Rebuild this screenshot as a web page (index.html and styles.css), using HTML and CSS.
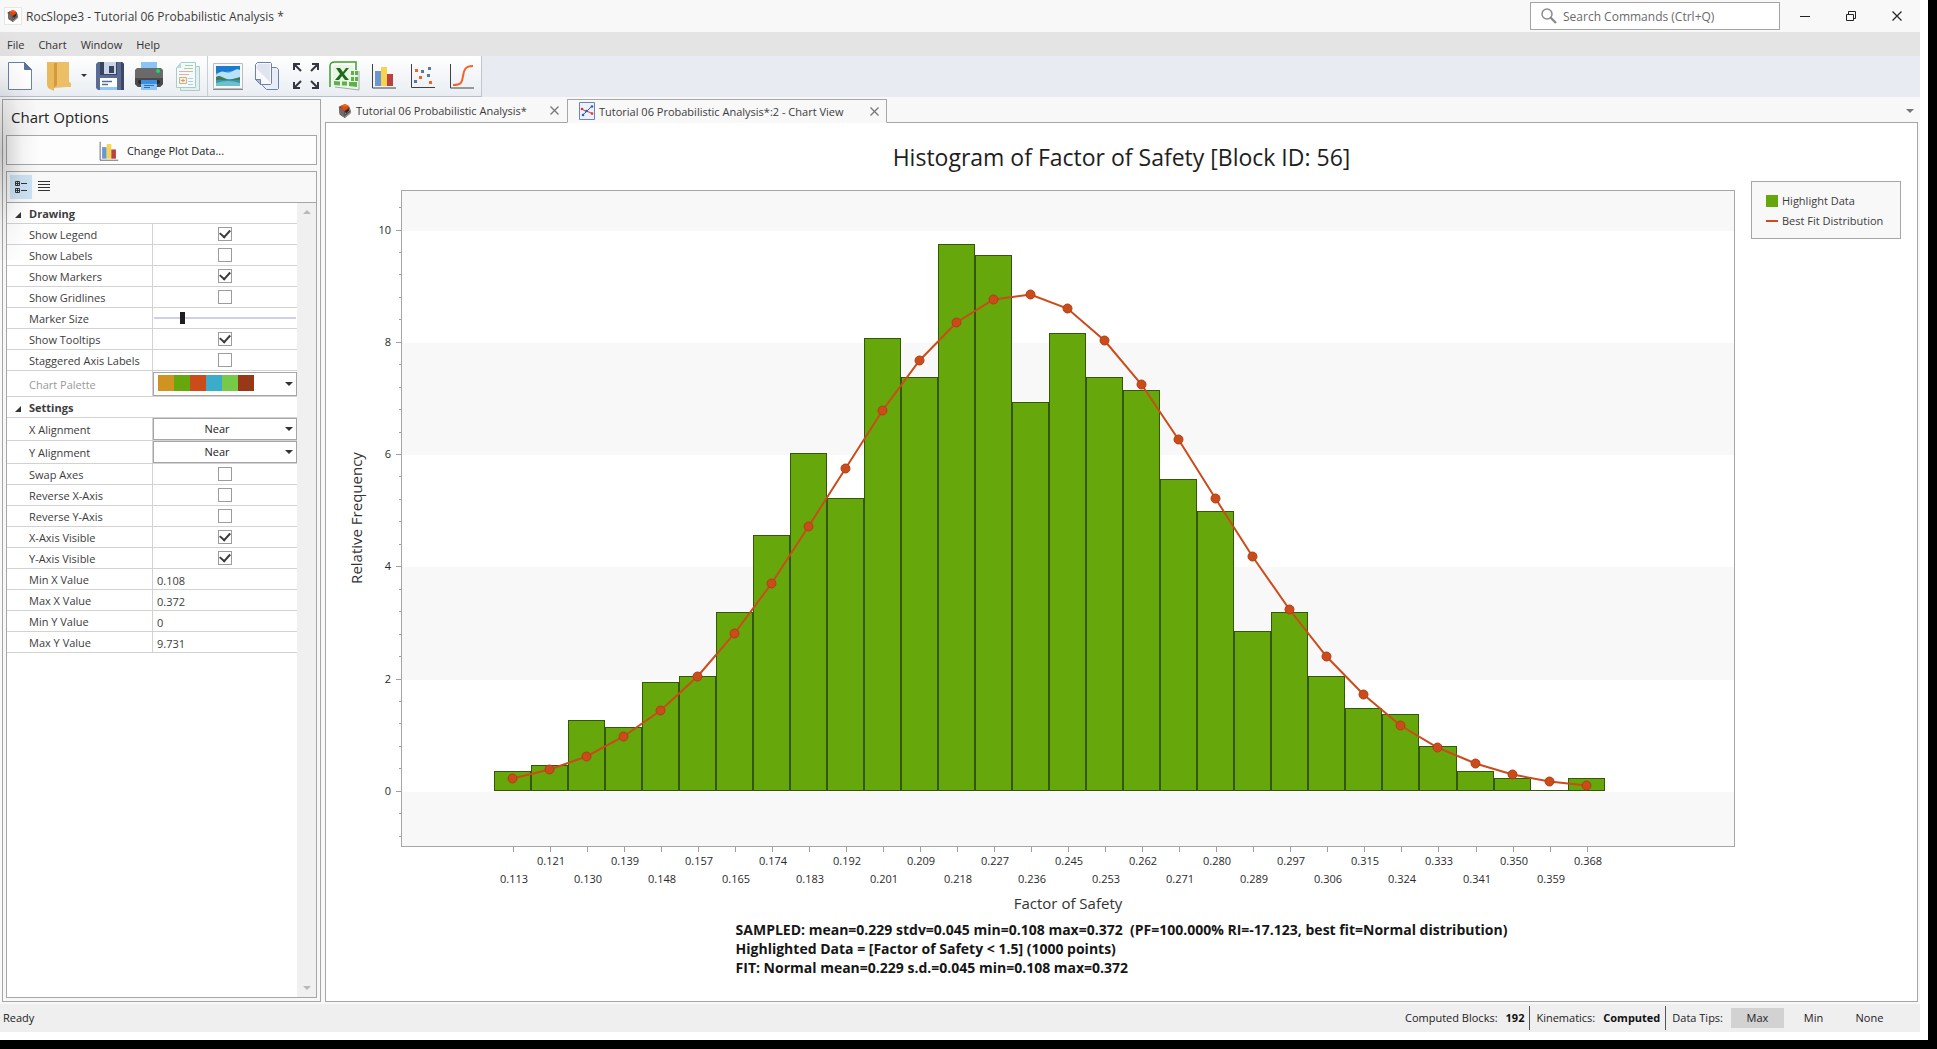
FILE: index.html
```html
<!DOCTYPE html>
<html lang="en">
<head>
<meta charset="utf-8">
<title>RocSlope3 - Tutorial 06 Probabilistic Analysis *</title>
<link rel="stylesheet" href="styles.css">
</head>
<body>
<svg class="defs" aria-hidden="true">
  <symbol id="i-rock" viewBox="0 0 16 16">
    <path d="M1 3 6 1l7 2 2 7-7 6-6-4z" fill="#4b4745"/>
    <path d="M1 3l6 5 1 8-6-4z" fill="#6f6b68"/>
    <path d="M8 10l6-5 1 5-7 6z" fill="#a09c98"/>
    <path d="M8 12l6-5v2l-6 5z" fill="#4f4b48"/>
    <path d="M3 2 8 0l4 2v3L8 8 4 6z" fill="#e0480c"/>
    <path d="M4 2l4 1 4-1-4-2z" fill="#f2642a"/>
    <path d="M8 8l4-3 1 2-4 4z" fill="#2b2725"/>
  </symbol>
  <symbol id="i-bars" viewBox="0 0 24 26">
    <path d="M3 8h6v15H3z" fill="#6b95d4"/><path d="M9 4h6v19H9z" fill="#f7d44c"/><path d="M15 11h6v12h-6z" fill="#bb4040"/>
    <path d="M.5 1v24H24" fill="none" stroke="#3f4145"/>
  </symbol>
</svg>
<div class="frame">
<div class="app">
  <header class="titlebar">
    <span class="appicon"><svg width="12" height="12"><use href="#i-rock"/></svg></span>
    <h1>RocSlope3 - Tutorial 06 Probabilistic Analysis *</h1>
    <label class="search">
      <svg width="16" height="16" viewBox="0 0 16 16" fill="none" stroke="#8c8c8c"><circle cx="6" cy="6" r="5" stroke-width="1.5"/><path d="M9.500 9.500 15 15" stroke-width="2.400"/></svg>
      <input type="text" placeholder="Search Commands (Ctrl+Q)" aria-label="Search Commands">
    </label>
    <div class="winbtns">
      <button aria-label="Minimize"><svg width="12" height="12" viewBox="0 0 12 12"><path d="M1 6.500h10" stroke="#222"/></svg></button>
      <button aria-label="Restore"><svg width="12" height="12" viewBox="0 0 12 12" fill="none" stroke="#222"><path d="M1.500 4.500h7v6h-7zM3.500 4.500v-3h7v7h-2"/></svg></button>
      <button aria-label="Close"><svg width="12" height="12" viewBox="0 0 12 12"><path d="M1.500 1.500l9 9M10.500 1.500l-9 9" stroke="#222" stroke-width="1.200"/></svg></button>
    </div>
  </header>
  <nav class="menubar">
    <button>File</button><button>Chart</button><button>Window</button><button>Help</button>
  </nav>
  <div class="toolbar">
    <div class="tools">
      <button aria-label="New"><svg width="24" height="28" viewBox="0 0 24 28"><path d="M.5.5h16l7 7v20H.5z" fill="#fff" stroke="#6d81a8"/><path d="M16.500.5v7h7z" fill="#5d7298" stroke="#5d7298"/></svg></button>
      <button aria-label="Open"><svg width="24" height="29" viewBox="0 0 24 29"><path d="M0 0h22v20l2 1v4h-4L7 26z" fill="#ecbf67"/><path d="M0 0l7 3v26l-6-3-1-3z" fill="#e9b95c"/><path d="M7 1h3v22l-3 3z" fill="#d39b3c"/></svg></button>
      <button class="drop" aria-label="Recent files"><svg width="6" height="4" viewBox="0 0 6 4"><path d="M0 0h6L3 3z" fill="#333"/></svg></button>
      <button aria-label="Save"><svg width="28" height="28" viewBox="0 0 28 28"><path d="M2 0h24l2 2v26H2l-2-2V2z" fill="#596b92"/><path d="M25 0h1l2 2v26h-3z" fill="#3b4765"/><path d="M4 0h17v13H4z" fill="#37435f"/><path d="M8 0h12v12H8z" fill="#c9d4e6"/><path d="M13 4h5v7h-5z" fill="#37435f"/><path d="M4 16h17v12H4z" fill="#fff"/><path d="M4 25h17v3H4z" fill="#8fc7f5"/><path d="M6 19.500h10M6 22.500h6" stroke="#596b92" stroke-width="1.500"/></svg></button>
      <button aria-label="Print"><svg width="28" height="28" viewBox="0 0 28 28"><path d="M6 0h16v8H6z" fill="#8cc5f5"/><path d="M2 6h24l2 2v14l-3 3H3l-3-3V8z" fill="#6a6a6a"/><path d="M0 16h28v6l-3 3H3l-3-3z" fill="#4a4a4a"/><rect x="3" y="18" width="22" height="4" rx="2" fill="#2a2a2a"/><path d="M6 18h16v10H6z" fill="#8cc5f5"/><path d="M6 18h16v4H6z" fill="#3a8ee0"/><path d="M9 23.500h10M9 25.500h6" stroke="#2d6fb8"/><circle cx="23" cy="9" r="2" fill="#1bd96b"/></svg></button>
      <button aria-label="Copy report"><svg width="24" height="29" viewBox="0 0 24 29"><path d="M4.500 4.500h19v24h-19z" fill="#e4f0f0" stroke="#a9cccb"/><path d="M5 .5h14.500v25H.5V6z" fill="#f4fafa" stroke="#a9cccb"/><path d="M5 .5V6H.5z" fill="#b9dad8"/><path d="M9 3.500h8M8 6.500h9" stroke="#9fd39f"/><path d="M3 9.500h14M3 12.500h10" stroke="#eaaaaa"/><path d="M3.500 15.500h7v6h-7z" fill="#f7efd8" stroke="#c3b684"/><path d="M5 18.500h4M7 17v3" stroke="#d98f8f"/><path d="M12 16.500h5M12 19.500h5M12 22.500h5" stroke="#a8d0ee"/></svg></button>
      <span class="sep"></span>
      <button aria-label="Export image"><svg width="30" height="27" viewBox="0 0 30 27"><path d="M.5.5h29v25H.5z" fill="#f7f7f7" stroke="#bdbdbd"/><path d="M0 26.500h30" stroke="#8a8a8a"/><path d="M3 3h24v20H3z" fill="#4aa4e6"/><path d="M3 3h24v4L3 10z" fill="#1b7bd0"/><path d="M3 12q5-5 9-3t8-1 7-1v9H3z" fill="#b9e2f8"/><path d="M3 14q3-2 6 0l7 3 11-3v4H3z" fill="#3c7d5a"/><path d="M3 17h24v6H3z" fill="#3b94a8"/><path d="M3 20q12-4 24 0v3H3z" fill="#6ec0cc"/></svg></button>
      <button aria-label="Copy"><svg width="24" height="28" viewBox="0 0 24 28" stroke="#6d81b0"><path d="M9.500 5.500h12l2 2v19l-1 1h-11l-4-4v-16z" fill="#e9edf6"/><path d="M2.500.5h13l1 1v20l-1 1h-10l-5-5v-15z" fill="#f8f9fd"/><path d="M1 6 15 20V2H3z" fill="#dfe4f0" stroke="none"/><path d="M.5 17.500h5v5z" fill="#aab8d6"/></svg></button>
      <button aria-label="Zoom all"><svg width="26" height="26" viewBox="0 0 26 26" fill="none" stroke="#333840" stroke-width="2"><path d="M1 7V1h6M1 1l7 7M19 1h6v6M25 1l-7 7M1 19v6h6M1 25l7-7M25 19v6h-6M25 25l-7-7"/></svg></button>
      <button aria-label="Export to Excel"><svg width="31" height="30" viewBox="0 0 31 30"><path d="M1 26V5q0-4 5-4h21v8" fill="none" stroke="#3fa02c" stroke-width="1.500"/><path d="M4 24V7q0-3 4-3h16v5l6 1v18L4 25z" fill="#e9f5e3"/><path d="M6 26l24 3V10" fill="none" stroke="#a4aaa4"/><path d="M22 10h3v4h-3zM26 10h3v4h-3zM22 16h3v4h-3zM26 16h3v4h-3zM5 20l6 .5v4L5 24zM13 20.500h5v4h-5zM20 21h8v5l-8-1z" fill="#5db04b"/><path d="M7 7h4l3 4 3-4h3l-5 6 5 6h-4l-3-4-3 4H6l5-6z" fill="#1d6b1f"/></svg></button>
      <button aria-label="Histogram"><svg width="24" height="26"><use href="#i-bars"/></svg></button>
      <button aria-label="Scatter plot"><svg width="24" height="26" viewBox="0 0 24 26"><path d="M.5 1v23.500H24" fill="none" stroke="#3f4145"/><path d="M4 6h3v3H4zM8 13h3v3H8zM18 18h3v3h-3z" fill="#f2642a"/><path d="M10 7h3v3h-3zM17 4h3v3h-3zM16 11h3v3h-3zM3 17h3v3H3z" fill="#557b9b"/></svg></button>
      <button aria-label="Cumulative plot"><svg width="24" height="26" viewBox="0 0 24 26" fill="none"><path d="M.5 1v24H24" stroke="#3f4145"/><path d="M3 22c9 0 9-3 10-9s2-10 10-10" stroke="#f2642a" stroke-width="2"/></svg></button>
    </div>
  </div>
  <main class="workspace">
    <aside class="side">
      <h2>Chart Options</h2>
      <button class="change"><svg width="20" height="20"><use href="#i-bars"/></svg>Change Plot Data...</button>
      <div class="props">
        <div class="propbar">
          <button class="on" aria-label="Categorized"><svg width="12" height="13" viewBox="0 0 12 13" fill="none" stroke="#333"><path d="M.5 1.500h4v4h-4zM.5 8.500h4v4h-4zM6 3.500h6M6 10.500h6M1 3.500h3M1 10.500h3M2.500 2v3M2.500 9v3"/></svg></button>
          <button aria-label="Alphabetical"><svg width="12" height="11" viewBox="0 0 12 11" stroke="#333"><path d="M0 .5h12M0 3.500h12M0 6.500h12M0 9.500h12"/></svg></button>
        </div>
        <div class="propbody">
          <table class="grid">
            <tbody>
            <tr class="group"><th colspan="2"><svg width="6" height="6" viewBox="0 0 6 6"><path d="M6 0v6H0z" fill="#333"/></svg>Drawing</th></tr>
            <tr><th><label for="p1">Show Legend</label></th><td><input type="checkbox" id="p1" checked></td></tr>
            <tr><th><label for="p2">Show Labels</label></th><td><input type="checkbox" id="p2"></td></tr>
            <tr><th><label for="p3">Show Markers</label></th><td><input type="checkbox" id="p3" checked></td></tr>
            <tr><th><label for="p4">Show Gridlines</label></th><td><input type="checkbox" id="p4"></td></tr>
            <tr><th><label for="p5">Marker Size</label></th><td><input type="range" id="p5" min="0" max="100" value="19"></td></tr>
            <tr><th><label for="p6">Show Tooltips</label></th><td><input type="checkbox" id="p6" checked></td></tr>
            <tr><th><label for="p7">Staggered Axis Labels</label></th><td><input type="checkbox" id="p7"></td></tr>
            <tr class="tall"><th class="dim"><label for="p8">Chart Palette</label></th><td><button class="palette" id="p8" aria-label="Chart Palette"><span class="swatches"><i class="s1"></i><i class="s2"></i><i class="s3"></i><i class="s4"></i><i class="s5"></i><i class="s6"></i></span><svg width="8" height="4" viewBox="0 0 8 4"><path d="M0 0h8L4 4z" fill="#333"/></svg></button></td></tr>
            <tr class="group"><th colspan="2"><svg width="6" height="6" viewBox="0 0 6 6"><path d="M6 0v6H0z" fill="#333"/></svg>Settings</th></tr>
            <tr class="mid"><th><label for="q1">X Alignment</label></th><td><div class="pick"><select id="q1"><option>Near</option></select><svg width="8" height="4" viewBox="0 0 8 4"><path d="M0 0h8L4 4z" fill="#333"/></svg></div></td></tr>
            <tr class="mid"><th><label for="q2">Y Alignment</label></th><td><div class="pick"><select id="q2"><option>Near</option></select><svg width="8" height="4" viewBox="0 0 8 4"><path d="M0 0h8L4 4z" fill="#333"/></svg></div></td></tr>
            <tr><th><label for="q3">Swap Axes</label></th><td><input type="checkbox" id="q3"></td></tr>
            <tr><th><label for="q4">Reverse X-Axis</label></th><td><input type="checkbox" id="q4"></td></tr>
            <tr><th><label for="q5">Reverse Y-Axis</label></th><td><input type="checkbox" id="q5"></td></tr>
            <tr><th><label for="q6">X-Axis Visible</label></th><td><input type="checkbox" id="q6" checked></td></tr>
            <tr><th><label for="q7">Y-Axis Visible</label></th><td><input type="checkbox" id="q7" checked></td></tr>
            <tr><th><label for="q8">Min X Value</label></th><td><input type="text" id="q8" value="0.108"></td></tr>
            <tr><th><label for="q9">Max X Value</label></th><td><input type="text" id="q9" value="0.372"></td></tr>
            <tr><th><label for="q10">Min Y Value</label></th><td><input type="text" id="q10" value="0"></td></tr>
            <tr><th><label for="q11">Max Y Value</label></th><td><input type="text" id="q11" value="9.731"></td></tr>
            </tbody>
          </table>
          <div class="scroll" aria-hidden="true">
            <svg width="8" height="4" viewBox="0 0 8 4"><path d="M0 4h8L4 0z" fill="#b9b9b9"/></svg>
            <svg width="8" height="4" viewBox="0 0 8 4"><path d="M0 0h8L4 4z" fill="#b9b9b9"/></svg>
          </div>
        </div>
      </div>
    </aside>
    <section class="docs">
      <div class="tabs">
        <div class="tab"><svg width="14" height="14"><use href="#i-rock"/></svg><span class="name">Tutorial 06 Probabilistic Analysis*</span><button aria-label="Close tab"><svg width="9" height="9" viewBox="0 0 9 9"><path d="M.5.5l8 8M8.500.5l-8 8" stroke="#777" stroke-width="1.300"/></svg></button></div>
        <div class="tab active"><svg width="16" height="18" viewBox="0 0 16 18"><path d="M.5.5h15v17H.5z" fill="#eef1fa" stroke="#6e82c0"/><path d="M3 13.500 7 10l2-2 4-4" fill="none" stroke="#2a62b8"/><path d="M2.500 6.500 6 9l4 1 4 2" fill="none" stroke="#d03a30"/><circle cx="4" cy="13" r="1.300" fill="#2a62b8"/><circle cx="13" cy="4.500" r="1.300" fill="#2a62b8"/><circle cx="3" cy="7" r="1.300" fill="#d03a30"/><circle cx="13" cy="11.500" r="1.300" fill="#d03a30"/><circle cx="7.500" cy="9" r="1.300" fill="#2a62b8"/></svg><span class="name">Tutorial 06 Probabilistic Analysis*:2 - Chart View</span><button aria-label="Close tab"><svg width="9" height="9" viewBox="0 0 9 9"><path d="M.5.5l8 8M8.500.5l-8 8" stroke="#777" stroke-width="1.300"/></svg></button></div>
        <div class="tabrest"><button aria-label="Open documents"><svg width="8" height="4" viewBox="0 0 8 4"><path d="M0 0h8L4 4z" fill="#777"/></svg></button></div>
      </div>
      <div class="view">
        <h2>Histogram of Factor of Safety [Block ID: 56]</h2>
        <div class="chartrow">
          <div class="plot"><svg id="plot" role="img" aria-label="Histogram of Factor of Safety"></svg></div>
          <ul class="legend"><li><i class="box"></i>Highlight Data</li><li><i class="dash"></i>Best Fit Distribution</li></ul>
        </div>
        <div class="stats">
          <p>SAMPLED: mean=0.229 stdv=0.045 min=0.108 max=0.372&nbsp; (PF=100.000% RI=-17.123, best fit=Normal distribution)</p>
          <p>Highlighted Data = [Factor of Safety &lt; 1.5] (1000 points)</p>
          <p>FIT: Normal mean=0.229 s.d.=0.045 min=0.108 max=0.372</p>
        </div>
      </div>
    </section>
  </main>
  <footer class="status">
    <span class="ready">Ready</span>
    <span class="cell">Computed Blocks: <b>192</b></span>
    <span class="cell">Kinematics: <b>Computed</b></span>
    <span class="tips">Data Tips:</span>
    <div class="tipbtns"><button class="on">Max</button><button>Min</button><button>None</button></div>
  </footer>
</div>
</div>
<script src="chart.js"></script>
</body>
</html>
```
FILE: styles.css
```css
* { box-sizing: border-box; }
html, body { height: 100%; }
body {
  margin: 0;
  padding: 0 9px 9px 0;
  background: #000;
  font: 11px/16px "Open Sans", "Noto Sans", sans-serif;
  color: #3c3c3c;
}
h1, h2, p, ul { margin: 0; padding: 0; font-weight: 400; }
button, input, select { font: inherit; color: inherit; border: 0; padding: 0; margin: 0; background: none; }
svg { display: block; flex: none; }
.defs { position: absolute; width: 0; height: 0; }

.frame { height: 100%; background: #fff; padding: 0 8px 8px 0; }
.app { position: relative; height: 100%; display: flex; flex-direction: column; background: #f8f8f8; }
/* soft shade on the window's left edge */
.app::before {
  content: "";
  position: absolute;
  left: 0;
  top: 20px;
  width: 40px;
  height: 240px;
  background: radial-gradient(ellipse at 0 55%, rgba(0,0,0,.2), rgba(0,0,0,.04) 40%, transparent 70%);
  pointer-events: none;
  z-index: 1;
}

/* title bar */
.titlebar { flex: none; height: 32px; display: flex; align-items: center; padding-left: 5px; }
.appicon { width: 16px; height: 16px; display: grid; place-items: center; background: #fff; outline: 1px solid #e6e6e6; }
.titlebar h1 { flex: 1; margin-left: 5px; padding-top: 1px; font-size: 12px; }
.search { width: 250px; height: 28px; display: flex; align-items: center; gap: 6px; padding: 0 10px; border: 1px solid #a3a3a3; background: #fff; }
.search input { flex: 1; min-width: 0; padding-top: 1px; outline: 0; font-size: 12px; }
.search input::placeholder { color: #6a6a6a; }
.winbtns { display: flex; margin-left: 2px; }
.winbtns button { width: 46px; height: 32px; display: grid; place-items: center; }

.menubar { flex: none; height: 24px; display: flex; align-items: center; gap: 14px; padding: 2px 0 0 7px; background: #e4e4e4; }
.menubar button { color: #333; }

/* toolbar */
.toolbar { flex: none; height: 41px; background: #e8ecf2; display: flex; }
.tools { display: flex; background: linear-gradient(#fff, #e9edf2); border-right: 1px solid #c0c6cc; border-bottom: 1px solid #b9bfc6; }
.tools button { width: 39px; display: grid; place-items: center; }
.tools .drop { width: 12px; }
.sep { width: 1px; background: #c9ced4; }

/* workspace */
.workspace { flex: 1; min-height: 0; display: flex; gap: 4px; padding: 0 2px 2px; }
.side { flex: none; width: 319px; margin-top: 2px; border: 1px solid #a6a6a6; padding: 0 3px 3px; display: flex; flex-direction: column; }
.side h2 { font-size: 15px; line-height: 35px; padding-left: 5px; color: #222; }
.change { height: 30px; padding-top: 1px; border: 1px solid #a6a6a6; background: #fdfdfd; display: flex; align-items: center; justify-content: center; gap: 8px; color: #222; }
.props { flex: 1; min-height: 0; margin-top: 6px; border: 1px solid #a6a6a6; display: flex; flex-direction: column; }
.propbar { height: 31px; flex: none; display: flex; align-items: center; gap: 1px; padding: 0 0 1px 3px; border-bottom: 1px solid #a6a6a6; }
.propbar button { width: 22px; height: 24px; display: grid; place-items: center; }
.propbar .on { background: #cce3f5; }
.propbody { flex: 1; min-height: 0; display: flex; align-items: flex-start; background: #fff; }
.grid { flex: 1; table-layout: fixed; border-collapse: separate; border-spacing: 0; }
.grid tr { height: 21px; }
.grid th, .grid td { padding: 0; border-bottom: 1px solid #d2d2d2; font-weight: 400; text-align: left; height: 21px; line-height: 18px; vertical-align: middle; }
.grid th { width: 146px; padding: 2px 0 0 22px; border-right: 1px solid #d2d2d2; white-space: nowrap; }
.grid .group th { font-weight: 700; border-right: 0; width: auto; padding-left: 8px; }
.group svg { display: inline-block; margin-right: 8px; }
.grid .tall th, .grid .tall td { height: 26px; }
.grid .mid th, .grid .mid td { height: 23px; }
.grid .dim { color: #9a9a9a; }
.grid input[type=checkbox] { appearance: none; display: grid; place-items: center; width: 14px; height: 14px; margin: 0 auto; border: 1px solid #9c9c9c; background: #fff; }
.grid input[type=checkbox]:checked::before { content: ""; width: 8px; height: 5px; margin-top: -3px; border: solid #3a3a3a; border-width: 0 0 2px 2px; transform: rotate(-48deg); }
.grid input[type=text] { display: block; width: 100%; padding: 2px 0 0 4px; height: 20px; outline: 0; }
.grid input[type=range] { appearance: none; display: block; width: calc(100% - 2px); height: 14px; margin: 0 1px; }
.grid input[type=range]::-webkit-slider-runnable-track { height: 2px; background: #cfd1e2; }
.grid input[type=range]::-webkit-slider-thumb { appearance: none; width: 5px; height: 12px; margin-top: -5px; background: #1e1e1e; }
.palette { width: 100%; height: 24px; display: flex; justify-content: space-between; align-items: center; padding: 0 3px 0 4px; border: 1px solid #a6a6a6; background: #fff; }
.swatches { display: flex; align-self: flex-start; margin-top: 2px; }
.swatches i { width: 16px; height: 16px; }
.s1 { background: #cf931f; } .s2 { background: #66a80b; } .s3 { background: #cb4b1b; }
.s4 { background: #3bacc9; } .s5 { background: #77c948; } .s6 { background: #973819; }
.pick { position: relative; }
.pick select { appearance: none; display: block; width: 100%; height: 22px; padding-right: 16px; text-align: center; text-align-last: center; border: 1px solid #a6a6a6; background: #fff; color: #222; border-radius: 0; }
.pick svg { position: absolute; right: 4px; top: 9px; pointer-events: none; }
.scroll { flex: none; align-self: stretch; width: 19px; background: #f0f0f0; display: flex; flex-direction: column; justify-content: space-between; align-items: center; padding: 7px 0; }

/* documents */
.docs { flex: 1; min-width: 0; display: flex; flex-direction: column; }
.tabs { flex: none; height: 26px; display: flex; padding-top: 2px; }
.tab { display: flex; align-items: center; padding: 0 8px 0 13px; gap: 4px; width: 242px; border-bottom: 1px solid #a6a6a6; }
.tab .name { flex: 1; padding-top: 1px; white-space: nowrap; }
.tab.active { width: 320px; padding: 0 7px 0 11px; border: 1px solid #a6a6a6; border-bottom-color: #f8f8f8; }
.tabrest { flex: 1; display: flex; justify-content: flex-end; align-items: center; padding-right: 4px; border-bottom: 1px solid #a6a6a6; }
.view { flex: 1; min-height: 0; display: flex; flex-direction: column; border: 1px solid #a6a6a6; border-top: 0; background: #fff; padding-bottom: 24px; }
.view h2 { margin-top: 18px; font-size: 23px; line-height: 32px; text-align: center; color: #1e1e1e; }
.chartrow { flex: 1; min-height: 0; margin-top: 8px; display: flex; align-items: flex-start; gap: 16px; padding-right: 16px; }
.plot { flex: 1; min-width: 0; height: 100%; }
.plot svg { width: 100%; height: 100%; overflow: visible; }
.plot text { fill: #2a2a2a; font-size: 11px; }
.plot .axis-title { font-size: 15px; fill: #333; }
.legend { flex: none; width: 150px; height: 58px; padding: 9px 0 0 14px; border: 1px solid #a6a6a6; background: #f8f8f8; list-style: none; }
.legend li { display: flex; align-items: center; gap: 4px; height: 20px; white-space: nowrap; }
.legend .box { width: 12px; height: 12px; background: #66a80b; }
.legend .dash { width: 12px; height: 2px; background: #cb4b1b; }
.stats { align-self: center; font-size: 14px; line-height: 19px; color: #161616; }
.stats p { font-weight: 700; white-space: nowrap; }

/* status bar */
.status { flex: none; height: 28px; display: flex; align-items: center; padding: 0 24px 0 3px; background: #efefef; color: #222; }
.ready { flex: 1; }
.cell { display: flex; align-items: center; gap: 8px; height: 24px; padding-right: 5px; margin-right: 6px; border-right: 1px solid #555; }
.cell b { color: #111; }
.tipbtns { display: flex; gap: 3px; margin-left: 8px; }
.tipbtns button { width: 53px; height: 20px; }
.tipbtns .on { background: #d2d2d2; }
```
FILE: chart.js
```js
const frequencies = [0.36, 0.46, 1.27, 1.14, 1.94, 2.05, 3.19, 4.55, 6.02, 5.22, 8.06, 7.38, 9.75, 9.54, 6.92,
  8.16, 7.38, 7.15, 5.56, 4.99, 2.85, 3.19, 2.05, 1.48, 1.37, 0.80, 0.36, 0.23, 0, 0.23];
const fit = [0.23, 0.39, 0.62, 0.98, 1.44, 2.05, 2.82, 3.71, 4.72, 5.76, 6.79, 7.68, 8.36, 8.77, 8.86,
  8.61, 8.04, 7.24, 6.27, 5.22, 4.19, 3.24, 2.41, 1.73, 1.18, 0.78, 0.50, 0.30, 0.18, 0.11];
const labels = ["0.113", "0.121", "0.130", "0.139", "0.148", "0.157", "0.165", "0.174", "0.183", "0.192",
  "0.201", "0.209", "0.218", "0.227", "0.236", "0.245", "0.253", "0.262", "0.271", "0.280",
  "0.289", "0.297", "0.306", "0.315", "0.324", "0.333", "0.341", "0.350", "0.359", "0.368"];

const xRange = [0.0859, 0.4030];
const yRange = [-0.984, 10.705];
const data = [0.108, 0.372];
const margin = { left: 75, top: 9, bottom: 74 };
const svg = document.getElementById("plot");

function draw() {
  const box = svg.getBoundingClientRect();
  const w = Math.round(box.width) - margin.left;
  const h = Math.round(box.height) - margin.top - margin.bottom;
  const bottom = margin.top + h;
  const x = v => margin.left + (v - xRange[0]) / (xRange[1] - xRange[0]) * w;
  const y = v => Math.round(margin.top + (yRange[1] - v) / (yRange[1] - yRange[0]) * h);
  const step = (data[1] - data[0]) / frequencies.length;
  const out = [];
  const line = (x1, y1, x2, y2, color = "#a0a0a0") =>
    out.push(`<path d="M${x1} ${y1}L${x2} ${y2}" stroke="${color}" fill="none"/>`);

  // alternating horizontal bands
  out.push(`<rect x="${margin.left}" y="${margin.top}" width="${w}" height="${h}" fill="#fff"/>`);
  [[yRange[1], 10], [8, 6], [4, 2], [0, yRange[0]]].forEach(([a, b]) => {
    out.push(`<rect x="${margin.left}" y="${y(a) + 1}" width="${w}" height="${y(b) - y(a)}" fill="#f8f8f8"/>`);
  });
  out.push(`<rect x="${margin.left + 0.5}" y="${margin.top + 0.5}" width="${w - 1}" height="${h}" fill="none" stroke="#a6a6a6"/>`);

  // value axis
  for (let i = -2; i <= 26; i++) {
    const v = i * 0.4;
    const major = i % 5 === 0;
    line(margin.left - (major ? 5 : 2), y(v) + 0.5, margin.left, y(v) + 0.5);
    if (major) out.push(`<text x="${margin.left - 10}" y="${y(v) + 4}" text-anchor="end">${Math.round(v)}</text>`);
  }

  // argument axis and bars
  const points = [];
  frequencies.forEach((f, i) => {
    const x0 = Math.round(x(data[0] + step * i));
    const x1 = Math.round(x(data[0] + step * (i + 1)));
    const mid = Math.round((x0 + x1) / 2);
    if (f > 0) {
      out.push(`<rect x="${x0 + 0.5}" y="${y(f) + 0.5}" width="${x1 - x0 - 1}" height="${y(0) - y(f) - 1}" fill="#66a80b" stroke="#35570a"/>`);
    } else {
      line(x0, y(0) - 0.5, x1, y(0) - 0.5, "#35570a");
    }
    line(mid + 0.5, bottom + 1, mid + 0.5, bottom + 6);
    out.push(`<text x="${mid + 1}" y="${bottom + (i % 2 ? 19 : 37)}" text-anchor="middle">${labels[i]}</text>`);
    points.push([mid - 0.5, y(fit[i]) + 0.5]);
  });

  out.push(`<polyline points="${points.join(" ")}" fill="none" stroke="#cb4b1b" stroke-width="2"/>`);
  points.forEach(([px, py]) => {
    out.push(`<circle cx="${px}" cy="${py}" r="4.5" fill="#cb4b1b" stroke="#ae3f15"/>`);
  });

  out.push(`<text class="axis-title" x="${margin.left + w / 2}" y="${bottom + 63}" text-anchor="middle">Factor of Safety</text>`);
  out.push(`<text class="axis-title" transform="translate(36 ${margin.top + h / 2}) rotate(-90)" text-anchor="middle">Relative Frequency</text>`);
  svg.innerHTML = out.join("");
}

draw();
window.addEventListener("resize", draw);
```
